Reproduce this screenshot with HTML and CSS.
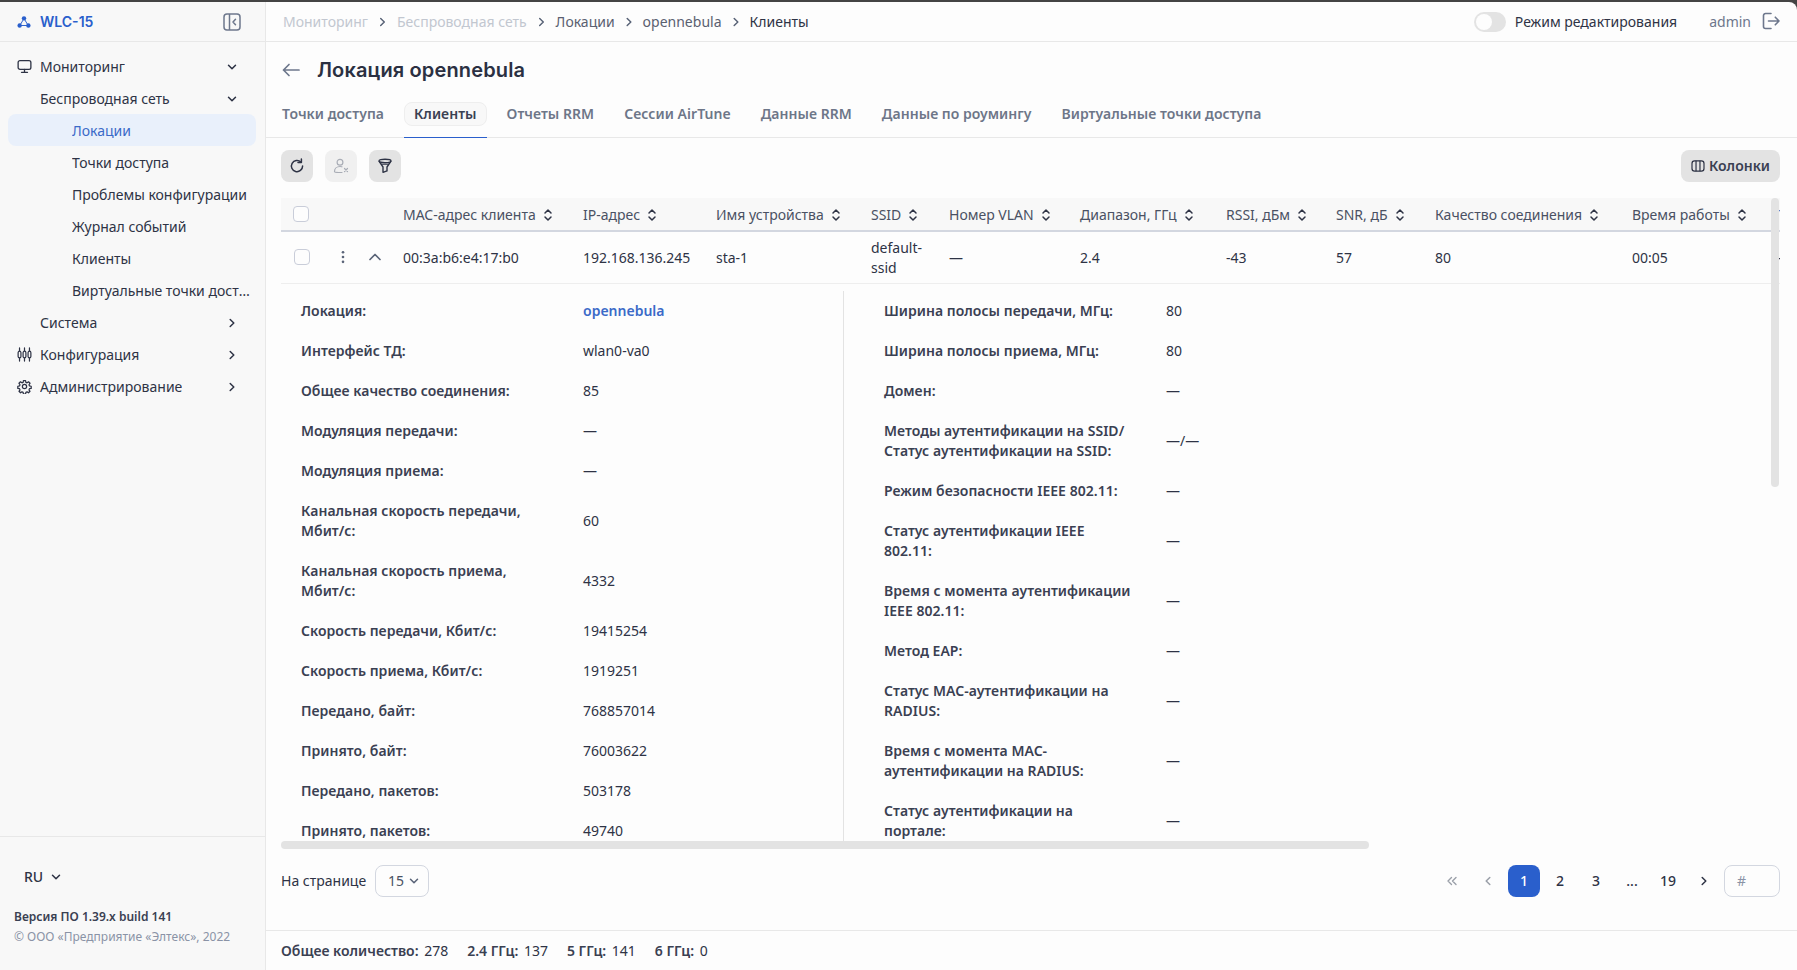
FILE: index.html
```html
<!DOCTYPE html>
<html lang="ru">
<head>
<meta charset="utf-8">
<title>WLC-15</title>
<link rel="stylesheet" href="styles.css">
</head>
<body>
<svg class="defs" aria-hidden="true">
  <symbol id="i-down" viewBox="0 0 12 12"><path d="M2.5 4.2 6 7.8l3.5-3.6" fill="none" stroke="currentColor" stroke-width="1.5" stroke-linecap="round" stroke-linejoin="round"/></symbol>
  <symbol id="i-right" viewBox="0 0 12 12"><path d="M4.2 2.5 7.8 6l-3.6 3.5" fill="none" stroke="currentColor" stroke-width="1.5" stroke-linecap="round" stroke-linejoin="round"/></symbol>
  <symbol id="i-sort" viewBox="0 0 10 16"><path d="M2 6 5 3l3 3M2 10l3 3 3-3" fill="none" stroke="currentColor" stroke-width="1.5" stroke-linecap="round" stroke-linejoin="round"/></symbol>
</svg>
<div class="app">
  <aside class="sidebar">
    <div class="brand">
      <svg class="brand-icon" viewBox="0 0 16 16"><path d="M8 4 3.2 12h9.600z" fill="none" stroke="#2a5fcc" stroke-width="1.1"/><circle cx="8" cy="3.800" r="2.500" fill="#2a5fcc"/><circle cx="3" cy="12" r="2.500" fill="#2a5fcc"/><circle cx="13" cy="12" r="2.500" fill="#2a5fcc"/></svg>
      <span class="brand-name">WLC-15</span>
      <svg class="collapse" viewBox="0 0 18 18"><rect x="1" y="1" width="16" height="16" rx="3" fill="none" stroke="#6d778c" stroke-width="1.5"/><path d="M6.5 1v16" stroke="#6d778c" stroke-width="1.5"/><path d="M12.5 6.2 10 9l2.5 2.8" fill="none" stroke="#6d778c" stroke-width="1.5" stroke-linecap="round" stroke-linejoin="round"/></svg>
    </div>
    <nav class="nav">
      <a class="nav-item">
        <svg class="nav-icon" viewBox="0 0 16 16"><rect x="1.2" y="1.7" width="13.6" height="9.3" rx="2" fill="none" stroke="#2e3345" stroke-width="1.4"/><path d="M8 11v3M4.8 14.2h6.4" stroke="#2e3345" stroke-width="1.4" stroke-linecap="round"/></svg>
        <span class="nav-text">Мониторинг</span><svg class="nav-chev"><use href="#i-down"/></svg>
      </a>
      <a class="nav-item lvl2"><span class="nav-text">Беспроводная сеть</span><svg class="nav-chev"><use href="#i-down"/></svg></a>
      <a class="nav-item lvl3 active"><span class="nav-text">Локации</span></a>
      <a class="nav-item lvl3"><span class="nav-text">Точки доступа</span></a>
      <a class="nav-item lvl3"><span class="nav-text">Проблемы конфигурации</span></a>
      <a class="nav-item lvl3"><span class="nav-text">Журнал событий</span></a>
      <a class="nav-item lvl3"><span class="nav-text">Клиенты</span></a>
      <a class="nav-item lvl3"><span class="nav-text">Виртуальные точки доступа</span></a>
      <a class="nav-item lvl2"><span class="nav-text">Система</span><svg class="nav-chev"><use href="#i-right"/></svg></a>
      <a class="nav-item">
        <svg class="nav-icon" viewBox="0 0 16 16"><g fill="none" stroke="#2e3345" stroke-width="1.3" stroke-linecap="round"><path d="M2.700 1v14M8 1v14M13.300 1v14"/></g><g fill="#f8f8f8" stroke="#2e3345" stroke-width="1.3"><rect x="1.200" y="4.500" width="3" height="7" rx="1.500"/><rect x="6.500" y="4.500" width="3" height="7" rx="1.500"/><rect x="11.800" y="4.500" width="3" height="7" rx="1.500"/></g></svg>
        <span class="nav-text">Конфигурация</span><svg class="nav-chev"><use href="#i-right"/></svg>
      </a>
      <a class="nav-item">
        <svg class="nav-icon" viewBox="0 0 24 24"><path d="M10.300 2.600h3.400l.5 2.700 1.900.8 2.300-1.600 2.400 2.400-1.600 2.300.8 1.900 2.700.5v3.400l-2.700.5-.8 1.900 1.600 2.300-2.400 2.400-2.300-1.600-1.900.8-.5 2.700h-3.400l-.5-2.700-1.900-.8-2.300 1.600-2.400-2.400 1.600-2.300-.8-1.900-2.700-.5v-3.400l2.700-.5.8-1.900-1.600-2.300 2.400-2.400 2.300 1.600 1.900-.8z" fill="none" stroke="#2e3345" stroke-width="2" stroke-linejoin="round"/><circle cx="12" cy="12" r="3.400" fill="none" stroke="#2e3345" stroke-width="2"/></svg>
        <span class="nav-text">Администрирование</span><svg class="nav-chev"><use href="#i-right"/></svg>
      </a>
    </nav>
    <div class="side-foot">
      <div class="lang">RU <svg class="lang-chev"><use href="#i-down"/></svg></div>
      <div class="version">Версия ПО 1.39.x build 141</div>
      <div class="copy">© ООО «Предприятие «Элтекс», 2022</div>
    </div>
  </aside>

  <main class="main">
    <header class="topbar">
      <nav class="crumbs">
        <span class="crumb off">Мониторинг</span><svg class="crumb-sep"><use href="#i-right"/></svg>
        <span class="crumb off">Беспроводная сеть</span><svg class="crumb-sep"><use href="#i-right"/></svg>
        <span class="crumb">Локации</span><svg class="crumb-sep"><use href="#i-right"/></svg>
        <span class="crumb">opennebula</span><svg class="crumb-sep"><use href="#i-right"/></svg>
        <span class="crumb now">Клиенты</span>
      </nav>
      <div class="top-right">
        <span class="toggle"><span class="knob"></span></span>
        <span class="edit-label">Режим редактирования</span>
        <span class="user">admin</span>
        <svg class="logout" viewBox="0 0 18 18"><path d="M9 1.500H3.500a2 2 0 0 0-2 2v11a2 2 0 0 0 2 2H9" fill="none" stroke="#6d778c" stroke-width="1.6" stroke-linecap="round"/><path d="M6.500 9h10.500M13.300 5.200 17 9l-3.700 3.800" fill="none" stroke="#6d778c" stroke-width="1.6" stroke-linecap="round" stroke-linejoin="round"/></svg>
      </div>
    </header>

    <div class="title-row">
      <svg class="back" viewBox="0 0 18 14"><path d="M17 7H1.500M7 1.500 1.500 7 7 12.500" fill="none" stroke="#6d778c" stroke-width="1.7" stroke-linecap="round" stroke-linejoin="round"/></svg>
      <h1 class="title">Локация opennebula</h1>
    </div>

    <div class="tabs">
      <span class="tab">Точки доступа</span>
      <span class="tab current"><span class="tab-pill">Клиенты</span></span>
      <span class="tab">Отчеты RRM</span>
      <span class="tab">Сессии AirTune</span>
      <span class="tab">Данные RRM</span>
      <span class="tab">Данные по роумингу</span>
      <span class="tab">Виртуальные точки доступа</span>
    </div>

    <div class="toolbar">
      <button class="tool"><svg viewBox="0 0 16 16"><path d="M13.600 8a5.600 5.600 0 1 1-1.700-4" fill="none" stroke="#2e3345" stroke-width="1.5" stroke-linecap="round"/><path d="M12.400 1v3.400H9" fill="none" stroke="#2e3345" stroke-width="1.5" stroke-linecap="round" stroke-linejoin="round"/></svg></button>
      <button class="tool off"><svg viewBox="0 0 16 16"><g fill="none" stroke="#a9adb6" stroke-width="1.2" stroke-linecap="round"><circle cx="7" cy="4.200" r="2.900"/><path d="M1.500 13.500c0-3 2.400-5 5.500-5 .7 0 1.300.1 1.900.3M1.500 13.500c0 .5 2 1 4.500 1h3"/><path d="m11.500 10.500 3 3M14.500 10.500l-3 3"/></g></svg></button>
      <button class="tool"><svg viewBox="0 0 16 16"><g fill="none" stroke="#2e3345" stroke-width="1.4" stroke-linejoin="round"><ellipse cx="8" cy="3" rx="6" ry="1.700"/><path d="M2 3.200 6 9v5.300l4-1.400V9l4-5.800"/><path d="M4 6.300h8" stroke-width="1.1"/></g></svg></button>
      <button class="columns"><svg viewBox="0 0 16 14"><g fill="none" stroke="#2e3345" stroke-width="1.4"><rect x="1" y="1" width="14" height="12" rx="3"/><path d="M5.700 1v12M10.300 1v12"/></g></svg>Колонки</button>
    </div>

    <section class="table-wrap">
      <div class="scroller">
        <table class="grid">
          <colgroup>
            <col class="c-sel"><col class="c-act"><col class="c-exp"><col class="c-mac"><col class="c-ip"><col class="c-name"><col class="c-ssid"><col class="c-vlan"><col class="c-band"><col class="c-rssi"><col class="c-snr"><col class="c-qual"><col class="c-time"><col class="c-more">
          </colgroup>
          <thead>
            <tr>
              <th class="box-cell"><span class="check"></span></th>
              <th></th>
              <th></th>
              <th>MAC-адрес клиента<svg class="sort"><use href="#i-sort"/></svg></th>
              <th>IP-адрес<svg class="sort"><use href="#i-sort"/></svg></th>
              <th>Имя устройства<svg class="sort"><use href="#i-sort"/></svg></th>
              <th>SSID<svg class="sort"><use href="#i-sort"/></svg></th>
              <th>Номер VLAN<svg class="sort"><use href="#i-sort"/></svg></th>
              <th>Диапазон, ГГц<svg class="sort"><use href="#i-sort"/></svg></th>
              <th>RSSI, дБм<svg class="sort"><use href="#i-sort"/></svg></th>
              <th>SNR, дБ<svg class="sort"><use href="#i-sort"/></svg></th>
              <th>Качество соединения<svg class="sort"><use href="#i-sort"/></svg></th>
              <th>Время работы<svg class="sort"><use href="#i-sort"/></svg></th>
              <th class="more-head">Тип</th>
            </tr>
          </thead>
          <tbody>
            <tr class="data-row">
              <td class="box-cell"><span class="check row-check"></span></td>
              <td class="icon-cell"><svg class="kebab" viewBox="0 0 4 16"><circle cx="2" cy="2.500" r="1.500"/><circle cx="2" cy="8" r="1.500"/><circle cx="2" cy="13.500" r="1.500"/></svg></td>
              <td class="icon-cell"><svg class="collapse-row" viewBox="0 0 12 8"><path d="M1 6.500 6 1.500l5 5" fill="none" stroke="#5a6478" stroke-width="1.7" stroke-linecap="round" stroke-linejoin="round"/></svg></td>
              <td>00:3a:b6:e4:17:b0</td>
              <td>192.168.136.245</td>
              <td>sta-1</td>
              <td>default-ssid</td>
              <td>—</td>
              <td>2.4</td>
              <td>-43</td>
              <td>57</td>
              <td>80</td>
              <td>00:05</td>
              <td>—</td>
            </tr>
            <tr>
              <td class="detail-cell" colspan="14">
                <div class="detail">
                  <dl class="kv kv-left">
                    <dt>Локация:</dt><dd><a class="link">opennebula</a></dd>
                    <dt>Интерфейс ТД:</dt><dd>wlan0-va0</dd>
                    <dt>Общее качество соединения:</dt><dd>85</dd>
                    <dt>Модуляция передачи:</dt><dd>—</dd>
                    <dt>Модуляция приема:</dt><dd>—</dd>
                    <dt>Канальная скорость передачи, Мбит/с:</dt><dd>60</dd>
                    <dt>Канальная скорость приема, Мбит/с:</dt><dd>4332</dd>
                    <dt>Скорость передачи, Кбит/с:</dt><dd>19415254</dd>
                    <dt>Скорость приема, Кбит/с:</dt><dd>1919251</dd>
                    <dt>Передано, байт:</dt><dd>768857014</dd>
                    <dt>Принято, байт:</dt><dd>76003622</dd>
                    <dt>Передано, пакетов:</dt><dd>503178</dd>
                    <dt>Принято, пакетов:</dt><dd>49740</dd>
                  </dl>
                  <dl class="kv kv-right">
                    <dt>Ширина полосы передачи, МГц:</dt><dd>80</dd>
                    <dt>Ширина полосы приема, МГц:</dt><dd>80</dd>
                    <dt>Домен:</dt><dd>—</dd>
                    <dt>Методы аутентификации на SSID/<br>Статус аутентификации на SSID:</dt><dd>—/—</dd>
                    <dt>Режим безопасности IEEE 802.11:</dt><dd>—</dd>
                    <dt>Статус аутентификации IEEE 802.11:</dt><dd>—</dd>
                    <dt>Время с момента аутентификации IEEE 802.11:</dt><dd>—</dd>
                    <dt>Метод EAP:</dt><dd>—</dd>
                    <dt>Статус MAC-аутентификации на RADIUS:</dt><dd>—</dd>
                    <dt>Время с момента MAC-аутентификации на RADIUS:</dt><dd>—</dd>
                    <dt>Статус аутентификации на портале:</dt><dd>—</dd>
                  </dl>
                </div>
              </td>
            </tr>
          </tbody>
        </table>
      </div>
      <div class="hbar"><span class="hthumb"></span></div>
      <span class="vthumb"></span>
    </section>

    <div class="pager-row">
      <div class="per-page">
        <span>На странице</span>
        <span class="select">15<svg class="select-chev"><use href="#i-down"/></svg></span>
      </div>
      <div class="pager">
        <span class="page dim"><svg class="page-icon" viewBox="0 0 12 12"><path d="M5.500 2.500 2 6l3.500 3.500M10 2.500 6.500 6l3.500 3.500" fill="none" stroke="currentColor" stroke-width="1.4" stroke-linecap="round" stroke-linejoin="round"/></svg></span>
        <span class="page dim"><svg class="page-icon" viewBox="0 0 12 12"><path d="M7.800 2.500 4.200 6l3.600 3.500" fill="none" stroke="currentColor" stroke-width="1.5" stroke-linecap="round" stroke-linejoin="round"/></svg></span>
        <span class="page on">1</span>
        <span class="page">2</span>
        <span class="page">3</span>
        <span class="page">...</span>
        <span class="page">19</span>
        <span class="page"><svg class="page-icon"><use href="#i-right"/></svg></span>
        <span class="jump">#</span>
      </div>
    </div>

    <footer class="totals">
      <span><b>Общее количество:</b> 278</span>
      <span><b>2.4 ГГц:</b> 137</span>
      <span><b>5 ГГц:</b> 141</span>
      <span><b>6 ГГц:</b> 0</span>
    </footer>
  </main>
</div>
</body>
</html>
```

FILE: styles.css
```css
* { box-sizing: border-box; }
html, body { height: 100%; }
body {
  margin: 0;
  background: #444;
  font-family: "Noto Sans", sans-serif;
  font-size: 14px;
  line-height: 20px;
  color: #2e3345;
  overflow: hidden;
}
.defs { display: none; }
.app {
  display: flex;
  height: 968px;
  margin-top: 2px;
  border-top-right-radius: 8px;
  overflow: hidden;
  background: #fdfdfd;
}

/* sidebar */
.sidebar {
  width: 266px;
  flex: none;
  display: flex;
  flex-direction: column;
  background: #f8f8f8;
  border-right: 1px solid #e8e8e8;
}
.brand {
  height: 40px;
  flex: none;
  display: flex;
  align-items: center;
  padding: 0 24px 0 17px;
  border-bottom: 1px solid #e8e8e8;
}
.brand-icon { width: 14px; height: 14px; margin-right: 9px; }
.brand-name { font-family: Inter, sans-serif; font-weight: 600; color: #2a5fcc; }
.collapse { width: 18px; height: 18px; margin-left: auto; }
.nav { padding-top: 8px; flex: 1; }
.nav-item {
  display: flex;
  align-items: center;
  height: 32px;
  margin: 0 9px 0 8px;
  padding: 1px 18px 0 9px;
  border-radius: 8px;
}
.nav-icon { width: 15px; height: 15px; margin-right: 8px; flex: none; }
.nav-chev { width: 12px; height: 12px; margin-left: auto; flex: none; }
.nav-text { white-space: nowrap; overflow: hidden; text-overflow: ellipsis; }
.lvl2 { padding-left: 32px; }
.lvl3 { padding-left: 64px; padding-right: 4px; }
.active { background: #e9f0fb; color: #3b6ac8; }
.side-foot {
  flex: none;
  height: 134px;
  padding: 24px 14px 0;
  border-top: 1px solid #e8e8e8;
}
.lang {
  display: flex;
  align-items: center;
  height: 32px;
  padding-left: 10px;
  font-weight: 500;
}
.lang-chev { width: 12px; height: 12px; margin-left: 7px; }
.version { margin-top: 14px; font-size: 12px; font-weight: 600; color: #3a4052; }
.copy { font-size: 12px; color: #8a93a6; }

/* main */
.main {
  flex: 1;
  min-width: 0;
  display: flex;
  flex-direction: column;
  padding: 0 17px 0 15px;
}
.topbar {
  height: 40px;
  flex: none;
  display: flex;
  align-items: center;
  justify-content: space-between;
  margin: 0 -17px 0 -15px;
  padding: 0 17px 0 17px;
  border-bottom: 1px solid #e8e8e8;
}
.crumbs { display: flex; align-items: center; gap: 8px; color: #5a6070; }
.crumb.off { color: #c2c7d0; }
.crumb.now { color: #2e3345; }
.crumb-sep { width: 12px; height: 12px; color: #5a6478; }
.crumb.off + .crumb-sep { width: 13px; }
.top-right { display: flex; align-items: center; }
.toggle {
  width: 32px;
  height: 20px;
  border-radius: 10px;
  background: #e3e3e3;
  padding: 2px;
  margin-right: 9px;
}
.knob { display: block; width: 16px; height: 16px; border-radius: 50%; background: #fdfdfd; }
.edit-label { margin-right: 32px; }
.user { color: #6d778c; margin-right: 11px; }
.logout { width: 18px; height: 18px; margin-top: -2px; }

.title-row { display: flex; align-items: center; margin-top: 14px; height: 28px; flex: none; }
.back { width: 18px; height: 14px; margin-left: 1px; margin-right: 17px; }
.title { margin: 0; font-family: Inter, sans-serif; font-size: 20px; line-height: 28px; font-weight: 600; letter-spacing: .14px; color: #2b3042; }

.tabs {
  display: flex;
  flex: none;
  gap: 10px;
  margin: 18px -17px 0 -15px;
  padding-left: 6px;
  height: 36px;
  border-bottom: 1px solid #e8e8e8;
  color: #6d7688;
  font-weight: 600;
}
.tab { padding: 0 10px; height: 35px; line-height: 24px; letter-spacing: .04px; }
.tab.current { padding: 0; border-bottom: 1px solid #2a5fcc; height: 36px; }
.tab-pill {
  display: block;
  padding: 0 9px;
  height: 24px;
  line-height: 22px;
  border: 1px solid #eee;
  border-radius: 8px;
  background: #f8f8f8;
  color: #3a4052;
}

.toolbar { display: flex; flex: none; gap: 12px; margin-top: 12px; }
.tool, .columns {
  border: 0;
  height: 32px;
  border-radius: 8px;
  background: #e3e3e3;
  display: flex;
  align-items: center;
  justify-content: center;
  font: inherit;
  color: #3a4052;
}
.tool { width: 32px; padding: 0; }
.tool svg { width: 16px; height: 16px; }
.tool.off { background: #f0f0f0; }
.columns { margin-left: auto; width: 99px; font-weight: 600; gap: 4px; }
.columns svg { width: 14px; height: 12px; }

/* table */
.table-wrap { position: relative; flex: 1; min-height: 0; margin-top: 16px; display: flex; flex-direction: column; }
.scroller { flex: 1; min-height: 0; overflow: hidden; }
.grid { table-layout: fixed; border-collapse: collapse; width: 1619px; }
.c-sel { width: 48px; }
.c-act { width: 30px; }
.c-exp { width: 32px; }
.c-mac { width: 180px; }
.c-ip { width: 133px; }
.c-name { width: 155px; }
.c-ssid { width: 78px; }
.c-vlan { width: 131px; }
.c-band { width: 146px; }
.c-rssi { width: 110px; }
.c-snr { width: 99px; }
.c-qual { width: 197px; }
.c-time { width: 146px; }
.c-more { width: 134px; }
.grid th {
  height: 33px;
  padding: 1px 12px 0;
  text-align: left;
  font-weight: 400;
  color: #4a5163;
  background: #f8f8f8;
  border-bottom: 2px solid #d3d7e0;
  white-space: nowrap;
}
.more-head { color: #5a7fc8 !important; }
.sort { width: 10px; height: 16px; margin-left: 7px; vertical-align: -3px; color: #2e3345; }
.box-cell { padding: 0 0 0 12px !important; }
.check {
  display: block;
  width: 16px;
  height: 16px;
  border: 1.5px solid #c9cdd9;
  border-radius: 4px;
  background: #fdfdfd;
}
.row-check { margin-left: 1px; }
.data-row td { height: 52px; padding: 2px 12px 0; border-bottom: 1px solid #eee; }
.data-row .icon-cell { padding: 0; }
.kebab { display: block; width: 4px; height: 14px; margin-left: 12px; fill: #5a6478; }
.collapse-row { display: block; width: 12px; height: 8px; margin-left: 10px; }
.detail-cell { padding: 0; vertical-align: top; }
.detail { display: flex; height: 558px; overflow: hidden; padding-top: 7px; }
.kv {
  margin: 0;
  display: grid;
  grid-template-columns: 248px 1fr;
  column-gap: 34px;
  row-gap: 20px;
  align-items: center;
  align-content: start;
  padding-top: 10px;
}
.kv dt { font-weight: 600; color: #3a4052; letter-spacing: .03px; }
.kv dd { margin: 0; }
.kv-left { width: 562px; padding-left: 20px; }
.kv-right { flex: 1; padding-left: 40px; border-left: 1px solid #e3e3e3; }
.link { color: #3b6ac8; font-weight: 600; }
.hbar { height: 8px; flex: none; }
.hthumb { display: block; width: 1088px; height: 8px; border-radius: 4px; background: #e3e3e3; }
.vthumb {
  position: absolute;
  top: 0;
  right: 1px;
  width: 8px;
  height: 289px;
  border-radius: 4px;
  background: #e3e3e3;
}

/* pager */
.pager-row { display: flex; flex: none; justify-content: space-between; align-items: center; height: 32px; margin-top: 16px; }
.per-page { display: flex; align-items: center; gap: 9px; }
.select {
  display: flex;
  align-items: center;
  width: 54px;
  height: 32px;
  padding-left: 12px;
  border: 1px solid #d3d7e0;
  border-radius: 8px;
  color: #4a5163;
}
.select-chev { width: 12px; height: 12px; margin-left: 4px; color: #5a6478; }
.pager { display: flex; align-items: center; gap: 4px; }
.page {
  width: 32px;
  height: 32px;
  display: flex;
  align-items: center;
  justify-content: center;
  border-radius: 8px;
  font-weight: 500;
}
.page.dim { color: #9a9fa8; }
.page.on { background: #2a5fcc; color: #fff; }
.page-icon { width: 12px; height: 12px; }
.jump {
  width: 56px;
  height: 32px;
  padding-left: 12px;
  line-height: 30px;
  border: 1px solid #d3d7e0;
  border-radius: 8px;
  color: #8a93a6;
}

.totals {
  flex: none;
  display: flex;
  align-items: center;
  gap: 19px;
  height: 40px;
  margin: 33px -17px 0 -15px;
  padding-left: 15px;
  border-top: 1px solid #e8e8e8;
}
.totals b { font-weight: 600; margin-right: 2px; color: #3a4052; }
```
